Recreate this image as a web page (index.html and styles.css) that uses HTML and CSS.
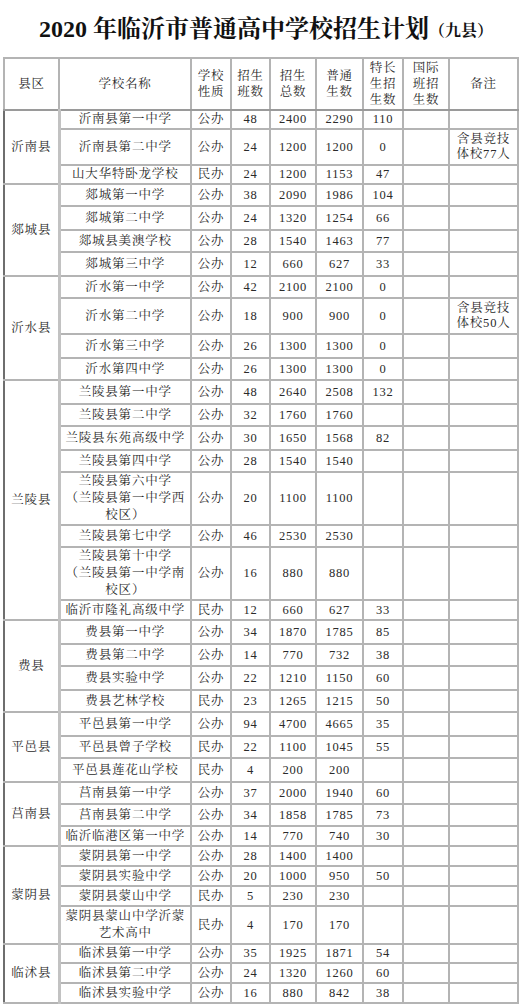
FILE: index.html
```html
<!DOCTYPE html>
<html lang="zh-CN">
<head>
<meta charset="utf-8">
<title>2020年临沂市普通高中学校招生计划（九县）</title>
<link rel="stylesheet" href="styles.css">
</head>
<body>
<div class="page">
  <h1 class="title"><span class="main">2020 年临沂市普通高中学校招生计划</span><span class="sub">（九县）</span></h1>
  <table class="plan">
    <colgroup>
      <col class="c-county"><col class="c-name"><col class="c-type"><col class="c-cls"><col class="c-total"><col class="c-norm"><col class="c-spec"><col class="c-intl"><col class="c-note">
    </colgroup>
    <thead>
      <tr class="head">
        <th>县区</th><th>学校名称</th><th>学校<br>性质</th><th>招生<br>班数</th><th>招生<br>总数</th><th>普通<br>生数</th><th>特长<br>生招<br>生数</th><th>国际<br>班招<br>生数</th><th>备注</th>
      </tr>
    </thead>
    <tbody>
      <tr class="xs grp"><td class="county" rowspan="3">沂南县</td><td>沂南县第一中学</td><td>公办</td><td>48</td><td>2400</td><td>2290</td><td>110</td><td></td><td></td></tr>
      <tr class="note"><td>沂南县第二中学</td><td>公办</td><td>24</td><td>1200</td><td>1200</td><td>0</td><td></td><td class="memo">含县竞技<br>体校77人</td></tr>
      <tr class="xs"><td>山大华特卧龙学校</td><td>民办</td><td>24</td><td>1200</td><td>1153</td><td>47</td><td></td><td></td></tr>

      <tr class="grp"><td class="county" rowspan="4">郯城县</td><td>郯城第一中学</td><td>公办</td><td>38</td><td>2090</td><td>1986</td><td>104</td><td></td><td></td></tr>
      <tr class="lg"><td>郯城第二中学</td><td>公办</td><td>24</td><td>1320</td><td>1254</td><td>66</td><td></td><td></td></tr>
      <tr><td>郯城县美澳学校</td><td>公办</td><td>28</td><td>1540</td><td>1463</td><td>77</td><td></td><td></td></tr>
      <tr class="lg"><td>郯城第三中学</td><td>公办</td><td>12</td><td>660</td><td>627</td><td>33</td><td></td><td></td></tr>

      <tr class="grp"><td class="county" rowspan="4">沂水县</td><td>沂水第一中学</td><td>公办</td><td>42</td><td>2100</td><td>2100</td><td>0</td><td></td><td></td></tr>
      <tr class="note"><td>沂水第二中学</td><td>公办</td><td>18</td><td>900</td><td>900</td><td>0</td><td></td><td class="memo">含县竞技<br>体校50人</td></tr>
      <tr class="lg"><td>沂水第三中学</td><td>公办</td><td>26</td><td>1300</td><td>1300</td><td>0</td><td></td><td></td></tr>
      <tr><td>沂水第四中学</td><td>公办</td><td>26</td><td>1300</td><td>1300</td><td>0</td><td></td><td></td></tr>

      <tr class="lg grp"><td class="county" rowspan="8">兰陵县</td><td>兰陵县第一中学</td><td>公办</td><td>48</td><td>2640</td><td>2508</td><td>132</td><td></td><td></td></tr>
      <tr><td>兰陵县第二中学</td><td>公办</td><td>32</td><td>1760</td><td>1760</td><td></td><td></td><td></td></tr>
      <tr class="lg"><td>兰陵县东苑高级中学</td><td>公办</td><td>30</td><td>1650</td><td>1568</td><td>82</td><td></td><td></td></tr>
      <tr><td>兰陵县第四中学</td><td>公办</td><td>28</td><td>1540</td><td>1540</td><td></td><td></td><td></td></tr>
      <tr class="tri"><td>兰陵县第六中学<br>（兰陵县第一中学西<br>校区）</td><td>公办</td><td>20</td><td>1100</td><td>1100</td><td></td><td></td><td></td></tr>
      <tr><td>兰陵县第七中学</td><td>公办</td><td>46</td><td>2530</td><td>2530</td><td></td><td></td><td></td></tr>
      <tr class="tri"><td>兰陵县第十中学<br>（兰陵县第一中学南<br>校区）</td><td>公办</td><td>16</td><td>880</td><td>880</td><td></td><td></td><td></td></tr>
      <tr class="sm"><td>临沂市隆礼高级中学</td><td>民办</td><td>12</td><td>660</td><td>627</td><td>33</td><td></td><td></td></tr>

      <tr class="lg grp"><td class="county" rowspan="4">费县</td><td>费县第一中学</td><td>公办</td><td>34</td><td>1870</td><td>1785</td><td>85</td><td></td><td></td></tr>
      <tr><td>费县第二中学</td><td>公办</td><td>14</td><td>770</td><td>732</td><td>38</td><td></td><td></td></tr>
      <tr class="lg"><td>费县实验中学</td><td>公办</td><td>22</td><td>1210</td><td>1150</td><td>60</td><td></td><td></td></tr>
      <tr><td>费县艺林学校</td><td>民办</td><td>23</td><td>1265</td><td>1215</td><td>50</td><td></td><td></td></tr>

      <tr class="lg grp"><td class="county" rowspan="3">平邑县</td><td>平邑县第一中学</td><td>公办</td><td>94</td><td>4700</td><td>4665</td><td>35</td><td></td><td></td></tr>
      <tr><td>平邑县曾子学校</td><td>民办</td><td>22</td><td>1100</td><td>1045</td><td>55</td><td></td><td></td></tr>
      <tr class="lg"><td>平邑县莲花山学校</td><td>民办</td><td>4</td><td>200</td><td>200</td><td></td><td></td><td></td></tr>

      <tr class="grp"><td class="county" rowspan="3">莒南县</td><td>莒南县第一中学</td><td>公办</td><td>37</td><td>2000</td><td>1940</td><td>60</td><td></td><td></td></tr>
      <tr><td>莒南县第二中学</td><td>公办</td><td>34</td><td>1858</td><td>1785</td><td>73</td><td></td><td></td></tr>
      <tr class="sm"><td>临沂临港区第一中学</td><td>公办</td><td>14</td><td>770</td><td>740</td><td>30</td><td></td><td></td></tr>

      <tr class="sm grp"><td class="county" rowspan="4">蒙阴县</td><td>蒙阴县第一中学</td><td>公办</td><td>28</td><td>1400</td><td>1400</td><td></td><td></td><td></td></tr>
      <tr class="sm"><td>蒙阴县实验中学</td><td>公办</td><td>20</td><td>1000</td><td>950</td><td>50</td><td></td><td></td></tr>
      <tr class="sm"><td>蒙阴县蒙山中学</td><td>民办</td><td>5</td><td>230</td><td>230</td><td></td><td></td><td></td></tr>
      <tr class="duo"><td>蒙阴县蒙山中学沂蒙<br>艺术高中</td><td>民办</td><td>4</td><td>170</td><td>170</td><td></td><td></td><td></td></tr>

      <tr class="xs grp"><td class="county" rowspan="3">临沭县</td><td>临沭县第一中学</td><td>公办</td><td>35</td><td>1925</td><td>1871</td><td>54</td><td></td><td></td></tr>
      <tr class="sm"><td>临沭县第二中学</td><td>公办</td><td>24</td><td>1320</td><td>1260</td><td>60</td><td></td><td></td></tr>
      <tr class="sm"><td>临沭县实验中学</td><td>公办</td><td>16</td><td>880</td><td>842</td><td>38</td><td></td><td></td></tr>
    </tbody>
  </table>
</div>
</body>
</html>
```
FILE: styles.css
```css
html, body {
  margin: 0;
  padding: 0;
  background: #ffffff;
}

body {
  color: #2a2a2a;
  font-family: "Liberation Serif", "Noto Serif CJK SC", "Noto Sans CJK SC", serif;
}

.page {
  padding: 0 3px;
}

.title {
  margin: 0;
  height: 57px;
  display: flex;
  align-items: center;
  justify-content: center;
  padding-left: 12px;
  padding-bottom: 4px;
  box-sizing: border-box;
  font-weight: bold;
  color: #111111;
}

.title .main {
  font-size: 24px;
  letter-spacing: 0;
}

.title .sub {
  font-size: 16px;
  margin-top: 5px;
}

.plan {
  width: 514px;
  border-collapse: collapse;
  table-layout: fixed;
  border: 2px solid #6e6e6e;
}

.c-county { width: 55px; }
.c-name { width: 132px; }
.c-type { width: 40px; }
.c-cls { width: 39px; }
.c-total { width: 46px; }
.c-norm { width: 47px; }
.c-spec { width: 40px; }
.c-intl { width: 46px; }
.c-note { width: 69px; }

.plan th,
.plan td {
  border: 2px solid #b4b4b4;
  padding: 0;
  text-align: center;
  vertical-align: middle;
  font-size: 12.5px;
  font-weight: normal;
  letter-spacing: 0.8px;
  line-height: 17px;
  white-space: nowrap;
  overflow: hidden;
}

.plan tr {
  height: 22px;
}

.plan tr.xs { height: 19px; }
.plan tr.sm { height: 20px; }
.plan tr.lg { height: 24px; }
.plan tr.note { height: 36px; }
.plan tr.duo { height: 38px; }
.plan tr.tri { height: 52px; }

.plan tr.head {
  height: 52px;
}

.plan tr.head th {
  line-height: 16px;
  border-bottom: 2px solid #9a9a9a;
}

.plan tr.grp td {
  border-top: 2px solid #8a8a8a;
}

.plan td.county {
  border-right: 3px solid #c2c2c2;
  border-left: 2px solid #6e6e6e;
}

.plan td.memo {
  line-height: 15px;
}
```
